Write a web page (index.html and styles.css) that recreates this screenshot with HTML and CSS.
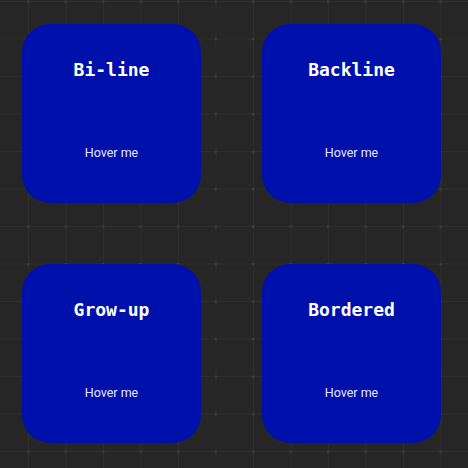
FILE: index.html
```html
<!DOCTYPE html>
<html>
<head>
<meta charset="utf-8">
<link rel="stylesheet" href="styles.css">
</head>
<body>
<main class="grid">
  <div class="card"><h2 class="title">Bi-line</h2><span class="hover">Hover me</span></div>
  <div class="card"><h2 class="title">Backline</h2><span class="hover">Hover me</span></div>
  <div class="card"><h2 class="title">Grow-up</h2><span class="hover">Hover me</span></div>
  <div class="card"><h2 class="title">Bordered</h2><span class="hover">Hover me</span></div>
</main>
</body>
</html>
```
FILE: styles.css
```css
html, body {
  margin: 0;
  padding: 0;
  width: 468px;
  height: 468px;
  overflow: hidden;
}
body {
  background-color: #262626;
  background-image:
    radial-gradient(circle at 1px 1px, #3c3c3c 0, #3c3c3c 1.2px, transparent 1.8px),
    linear-gradient(to right, #2e2e2e 1px, transparent 1px),
    linear-gradient(to bottom, #2e2e2e 1px, transparent 1px);
  background-size: 37.5px 37.5px;
  background-position: 27px 0.5px, 28px 1px, 28px 1px;
}
.grid {
  display: grid;
  grid-template-columns: 179px 179px;
  grid-auto-rows: 179px;
  column-gap: 61px;
  row-gap: 61px;
  padding: 24px 0 0 22px;
}
.card {
  background: #0011ab;
  border-radius: 28px;
  display: flex;
  flex-direction: column;
  align-items: center;
  padding-top: 34px;
  box-sizing: border-box;
}
.title {
  margin: 0;
  font-family: "DejaVu Sans Mono", monospace;
  font-weight: bold;
  font-size: 18px;
  line-height: 24px;
  color: #ffffff;
}
.hover {
  margin-top: 63px;
  font-family: Roboto, sans-serif;
  font-size: 12.5px;
  line-height: 16px;
  color: #e4e4ff;
}
```
